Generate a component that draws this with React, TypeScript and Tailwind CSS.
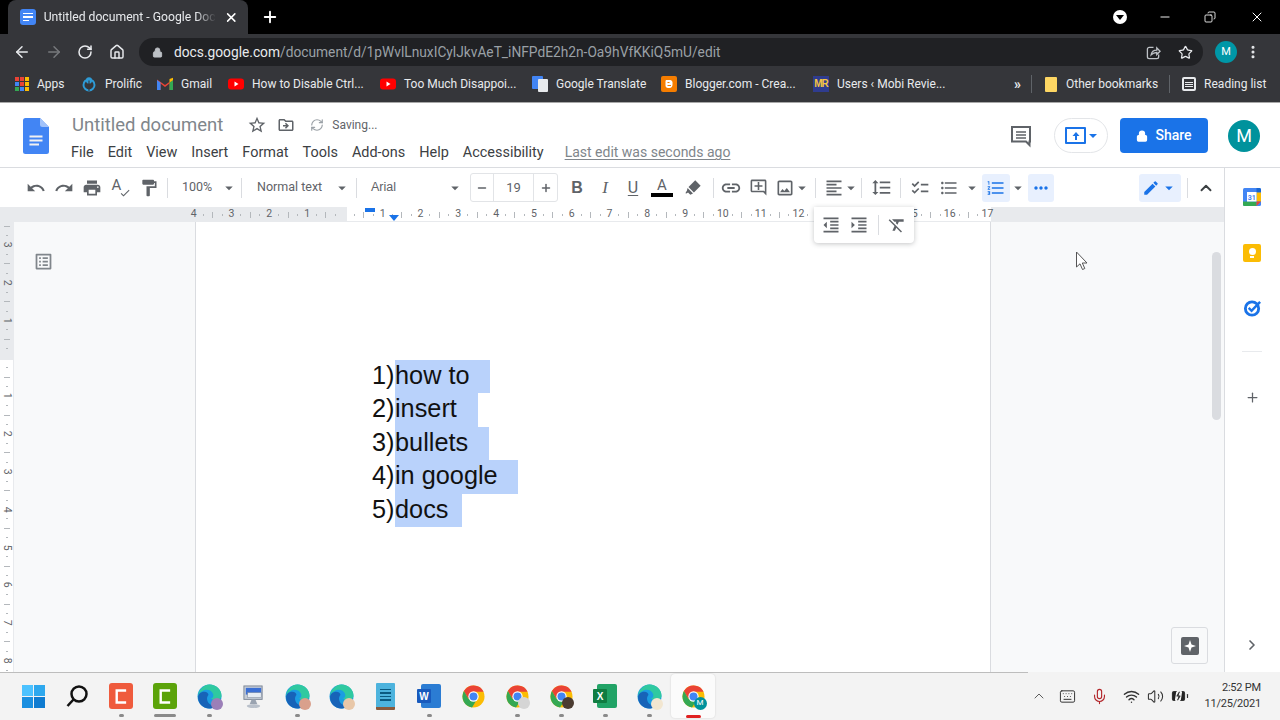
import { ArrowLeft, ArrowRight, RotateCw, Home, Lock, Star, Plus, X, Minus, Copy, ChevronUp, ChevronRight, Mic, Wifi, Volume2, Keyboard, BatteryCharging, EllipsisVertical, RefreshCw } from "lucide-react";
import {
  MdUndo, MdRedo, MdPrint, MdFormatPaint, MdLink, MdOutlineAddComment, MdOutlineImage, MdFormatAlignLeft,
  MdFormatLineSpacing, MdChecklist, MdFormatListBulleted, MdFormatListNumbered, MdMoreHoriz, MdEdit,
  MdFormatIndentDecrease, MdFormatIndentIncrease, MdFormatClear, MdOutlineDriveFileMove,
  MdStarBorder, MdOutlineListAlt, MdArrowDropDown, MdCheck,
} from "react-icons/md";

function DocsLogo({ className }: { className: string }) {
  return (
    <svg viewBox="0 0 26 36" className={className}>
      <path d="M2.5 0H17l9 9v24.5a2.5 2.5 0 0 1-2.5 2.5h-21A2.5 2.5 0 0 1 0 33.5v-31A2.5 2.5 0 0 1 2.5 0z" fill="#4285f4" />
      <path d="M17 0l9 9h-6.5A2.5 2.5 0 0 1 17 6.5z" fill="#a1c2fa" />
      <path d="M6.5 17.5h13v2h-13zM6.5 21.5h13v2h-13zM6.5 25.5h9.5v2H6.5z" fill="#f1f1f1" />
    </svg>
  );
}

function TabFavicon() {
  return (
    <div className="w-4 h-4 rounded-[3px] bg-[#4285f4] flex flex-col justify-center gap-[2px] px-[3px]">
      <div className="h-[1.5px] bg-white" />
      <div className="h-[1.5px] bg-white" />
      <div className="h-[1.5px] w-[6px] bg-white" />
    </div>
  );
}

function YouTubeIcon() {
  return (
    <svg viewBox="0 0 16 16" className="w-4 h-4">
      <rect x="0" y="2.5" width="16" height="11" rx="3" fill="#f00" />
      <path d="M6.5 5.5l4 2.5-4 2.5z" fill="#fff" />
    </svg>
  );
}

function AppsIcon() {
  const colors = ["#ea4335", "#ea4335", "#fbbc04", "#4285f4", "#ea4335", "#fbbc04", "#34a853", "#4285f4", "#fbbc04"];
  return (
    <div className="grid grid-cols-3 gap-[1.5px] w-[14px] h-[14px]">
      {colors.map((c, i) => (
        <div key={i} style={{ background: c }} />
      ))}
    </div>
  );
}

function ProlificIcon() {
  return (
    <svg viewBox="0 0 18 18" className="w-4 h-[18px]" fill="none">
      <circle cx="9" cy="10" r="6.2" stroke="#2e9bd6" strokeWidth="2.2" />
      <circle cx="9" cy="5" r="3.5" fill="#2e9bd6" />
      <path d="M9 5v12" stroke="#35363a" strokeWidth="1.2" />
    </svg>
  );
}

function GmailIcon() {
  return (
    <svg viewBox="0 0 16 14" className="w-4 h-[14px]">
      <path d="M0 2.5L8 8l8-5.5V13h-3.5V6.5L8 10 3.5 6.5V13H0z" fill="#ea4335" />
      <path d="M0 3v10h3.5V5.5z" fill="#4285f4" />
      <path d="M16 3v10h-3.5V5.5z" fill="#34a853" />
      <path d="M12.5 2L16 0.8V3l-3.5 2.5z" fill="#fbbc04" />
    </svg>
  );
}

function TranslateIcon() {
  return (
    <div className="relative w-4 h-4">
      <div className="w-[11px] h-[13px] bg-[#4285f4] rounded-[1px]" />
      <div className="absolute right-0 bottom-0 w-[10px] h-[13px] bg-[#e8eaed] rounded-[1px]" />
    </div>
  );
}

function BloggerIcon() {
  return (
    <svg viewBox="0 0 16 16" className="w-4 h-4">
      <rect width="16" height="16" rx="2" fill="#f57d00" />
      <path d="M5 4h4a2.5 2.5 0 0 1 2.5 3v1.5c0 2-1 3.5-3 3.5H7c-1.500 0-2.500-1-2.500-2.500V5z" fill="#fff" />
      <path d="M6.500 6.500h2M6.500 9.500h3.500" stroke="#f57d00" strokeWidth="1.200" />
    </svg>
  );
}

function MobiIcon() {
  return (
    <div className="w-4 h-4 bg-[#2f3c8f] flex items-center justify-center overflow-hidden">
      <span className="text-[10px] font-bold leading-none tracking-[-1px] text-[#f5c542] font-['Liberation_Sans',sans-serif]">MR</span>
    </div>
  );
}

function ChromeIcon() {
  return (
    <svg viewBox="0 0 24 24" className="w-[23px] h-[23px]">
      <circle cx="12" cy="12" r="11.500" fill="#fbbc04" />
      <path d="M12 .5A11.500 11.500 0 0 0 2 6.300L6.500 14l5.500-7h10.500A11.500 11.500 0 0 0 12 .5z" fill="#ea4335" />
      <path d="M2 6.300A11.500 11.500 0 0 0 10.500 23.400L15 16l-8.500-2z" fill="#34a853" />
      <circle cx="12" cy="12" r="5.400" fill="#fff" />
      <circle cx="12" cy="12" r="4.200" fill="#4285f4" />
    </svg>
  );
}

function EdgeIcon() {
  return (
    <svg viewBox="0 0 24 24" className="w-[25px] h-[25px]">
      <circle cx="12" cy="12" r="11.500" fill="#1b9de2" />
      <path d="M1 13C1 5 7 .5 12 .5c6.500 0 11.500 5 11.500 10.500 0 3-2.500 4.500-5.500 4.500-2 0-4-.7-4.500-1.500 2-.8 2.500-2.500 2-4.500C14.500 6.500 11 5 8 5.500 4 6.500 1 9.500 1 13z" fill="#2fc9a0" />
      <path d="M1 13c0-3.500 3-5.500 6-5.500 2.500 0 4 1.500 4 3-2 2-2 6 1.500 9 1.500 1 3 1.500 5 1.500-2 1.500-4 2.500-6 2.500C6 23.500 1 19 1 13z" fill="#1763b8" />
    </svg>
  );
}

function MiniBadge({ className }: { className: string }) {
  return <span className={`absolute -bottom-[1px] -right-[1px] w-[12px] h-[12px] rounded-full ${className}`} />;
}

function Slot({ dot, wide, active, children }: { dot?: boolean; wide?: boolean; active?: boolean; children: React.ReactNode }) {
  return (
    <div className={`relative w-[44px] h-[44px] flex items-center justify-center rounded-[4px] ${active ? "bg-[#fbfbfb] shadow-[0_0_2px_rgba(0,0,0,0.15)]" : ""}`}>
      {children}
      {dot && <div className="absolute bottom-[1px] w-[5px] h-[3px] rounded-full bg-[#8a8a8a]" />}
      {wide && <div className="absolute bottom-[1px] w-[22px] h-[3px] rounded-full bg-[#8a8a8a]" />}
      {active && <div className="absolute bottom-0 w-[15px] h-[3px] rounded-full bg-[#e02020]" />}
    </div>
  );
}

function Caret({ className = "text-[#5f6368]" }: { className?: string }) {
  return <MdArrowDropDown className={`w-[18px] h-[18px] ${className}`} />;
}

function ToolBtn({ children, className = "w-[28px]" }: { children: React.ReactNode; className?: string }) {
  return <div className={`h-[28px] flex items-center justify-center shrink-0 ${className}`}>{children}</div>;
}

function Sep({ className = "" }: { className?: string }) {
  return <div className={`w-px h-[20px] bg-[#dadce0] shrink-0 ${className}`} />;
}

function HorizontalRuler() {
  const labels = ["4", "3", "2", "1", "", "1", "2", "3", "4", "5", "6", "7", "8", "9", "10", "11", "12", "13", "14", "15", "16", "17"];
  return (
    <div className="relative h-[14px] flex items-center pl-[189px] pt-px overflow-hidden bg-[linear-gradient(to_right,#e8eaed_347px,#fff_347px,#fff_991px,#e8eaed_991px)]">
      {labels.map((label, i) => (
        <div key={i} className="w-[37.8px] shrink-0 flex items-center">
          <span className="w-[9.45px] text-center text-[10.5px] leading-none text-[#5f6368] whitespace-nowrap flex justify-center">{label}</span>
          {i < labels.length - 1 && (
            <>
              <span className="w-[9.45px] flex justify-center"><i className="block w-px h-[2px] bg-[#b4b8bc]" /></span>
              <span className="w-[9.45px] flex justify-center"><i className="block w-px h-[6px] bg-[#b4b8bc]" /></span>
              <span className="w-[9.45px] flex justify-center"><i className="block w-px h-[2px] bg-[#b4b8bc]" /></span>
            </>
          )}
        </div>
      ))}
      {/* indent markers */}
      <div className="absolute left-[365px] top-[1px] w-[10px] h-[4px] bg-[#1a73e8]" />
      <div className="absolute left-[389px] top-[8px] w-0 h-0 border-x-[5px] border-x-transparent border-t-[6px] border-t-[#1a73e8]" />
    </div>
  );
}

function VerticalRuler() {
  const labels = ["3", "2", "1", "", "1", "2", "3", "4", "5", "6", "7", "8"];
  return (
    <div className="w-[14px] shrink-0 overflow-hidden flex flex-col bg-[linear-gradient(to_bottom,#e8eaed_138px,#fff_138px)] border-r border-[#e8eaed]">
      <div className="h-[8.8px] flex items-center justify-center shrink-0"><i className="block h-px w-[6px] bg-[#b4b8bc]" /></div>
      <div className="h-[9.45px] flex items-center justify-center shrink-0"><i className="block h-px w-[2px] bg-[#b4b8bc]" /></div>
      {labels.map((label, i) => (
        <div key={i} className="h-[37.8px] shrink-0 flex flex-col">
          <span className="h-[9.45px] flex items-center justify-center text-[10.5px] leading-none text-[#5f6368] rotate-90">{label}</span>
          <span className="h-[9.45px] flex items-center justify-center"><i className="block h-px w-[2px] bg-[#b4b8bc]" /></span>
          <span className="h-[9.45px] flex items-center justify-center"><i className="block h-px w-[6px] bg-[#b4b8bc]" /></span>
          <span className="h-[9.45px] flex items-center justify-center"><i className="block h-px w-[2px] bg-[#b4b8bc]" /></span>
        </div>
      ))}
    </div>
  );
}

const listRows = [
  { n: "1)", text: "how to", w: "w-[95px]" },
  { n: "2)", text: "insert", w: "w-[83px]" },
  { n: "3)", text: "bullets", w: "w-[94px]" },
  { n: "4)", text: "in google", w: "w-[123px]" },
  { n: "5)", text: "docs", w: "w-[67px]" },
];

const bookmarks = [
  { icon: <AppsIcon />, label: "Apps", w: "w-[66px]" },
  { icon: <ProlificIcon />, label: "Prolific", w: "w-[76px]" },
  { icon: <GmailIcon />, label: "Gmail", w: "w-[71px]" },
  { icon: <YouTubeIcon />, label: "How to Disable Ctrl...", w: "w-[152px]" },
  { icon: <YouTubeIcon />, label: "Too Much Disappoi...", w: "w-[152px]" },
  { icon: <TranslateIcon />, label: "Google Translate", w: "w-[129px]" },
  { icon: <BloggerIcon />, label: "Blogger.com - Crea...", w: "w-[152px]" },
  { icon: <MobiIcon />, label: "Users ‹ Mobi Revie...", w: "w-[190px]" },
];

export default function App() {
  return (
    <div className="w-[1280px] h-[720px] overflow-hidden flex flex-col bg-white font-['Roboto',sans-serif]">
      {/* tab strip */}
      <div className="h-[34px] bg-black flex items-end shrink-0 text-white">
        <div className="ml-[8px] w-[240px] h-[34px] bg-[#35363a] rounded-t-[8px] flex items-center pl-[12px] pr-[10px] gap-[8px]">
          <TabFavicon />
          <span className="text-[12.2px] text-[#e8eaed] whitespace-nowrap overflow-hidden w-[178px] [mask-image:linear-gradient(to_right,#000_88%,transparent)]">
            Untitled document - Google Doc
          </span>
          <X className="w-[15px] h-[15px] text-white" strokeWidth={2.5} />
        </div>
        <div className="h-[34px] flex items-center ml-[13px]">
          <Plus className="w-[18px] h-[18px]" strokeWidth={2.5} />
        </div>
        <div className="ml-auto h-[34px] flex items-center">
          <div className="w-[14px] h-[14px] rounded-full bg-white flex items-center justify-center mr-[31px]">
            <div className="w-0 h-0 border-x-[4px] border-x-transparent border-t-[5px] border-t-black" />
          </div>
          <Minus className="w-[14px] h-[14px] text-white mr-[32px]" strokeWidth={1.6} />
          <Copy className="w-[12px] h-[12px] text-white mr-[33px] -scale-x-100" strokeWidth={1.7} />
          <X className="w-[16px] h-[16px] text-white mr-[15px]" strokeWidth={1.5} />
        </div>
      </div>

      {/* address bar */}
      <div className="h-[36px] bg-[#35363a] flex items-center shrink-0 text-[#e8eaed]">
        <div className="flex items-center pl-[13px]">
          <ArrowLeft className="w-[18px] h-[18px] mr-[14px]" />
          <ArrowRight className="w-[18px] h-[18px] mr-[14px] text-[#77797c]" />
          <RotateCw className="w-[16px] h-[16px] mr-[16px]" strokeWidth={2.3} />
          <Home className="w-[16px] h-[16px]" strokeWidth={2.2} />
        </div>
        <div className="ml-[14px] w-[1064px] h-[28px] rounded-full bg-[#202124] flex items-center pl-[13px] pr-[10px]">
          <Lock className="w-[11px] h-[11px] text-[#bdc1c6] fill-[#bdc1c6]" />
          <span className="ml-[11px] text-[13.75px] text-[#e8eaed] whitespace-nowrap">
            docs.google.com<span className="text-[#9aa0a6]">/document/d/1pWvlLnuxICylJkvAeT_iNFPdE2h2n-Oa9hVfKKiQ5mU/edit</span>
          </span>
          <svg viewBox="0 0 16 16" className="ml-auto w-[15px] h-[15px]" fill="none" stroke="#bdc1c6" strokeWidth="1.400">
            <path d="M8 2.500H3.500a2 2 0 0 0-2 2v8a2 2 0 0 0 2 2h8a2 2 0 0 0 2-2V10" />
            <path d="M5.500 10.500c.5-3 2.500-5 6-5V3l3.500 3.700-3.500 3.500V8c-2.500 0-4.500 1-6 2.500z" />
          </svg>
          <Star className="ml-[17px] w-[15px] h-[15px] text-[#e8eaed]" strokeWidth={2} />
        </div>
        <div className="ml-[12px] w-[22px] h-[22px] rounded-full bg-[#0097a7] flex items-center justify-center text-[11px] text-white">M</div>
        <EllipsisVertical className="ml-[8px] w-[16px] h-[16px]" strokeWidth={2.6} />
      </div>

      {/* bookmarks */}
      <div className="h-[33px] bg-[#35363a] flex items-center pl-[15px] pb-[4px] shrink-0 text-[12px] text-[#e8eaed] border-b border-[#a8a8a8]">
        {bookmarks.map((b) => (
          <div key={b.label} className={`flex items-center gap-[8px] shrink-0 whitespace-nowrap ${b.w}`}>
            {b.icon}
            <span>{b.label}</span>
          </div>
        ))}
        <span className="ml-[11px] w-[12px] text-[14px] font-bold">»</span>
        <div className="ml-[5px] w-px h-[18px] bg-[#5f6368]" />
        <div className="ml-[13px] w-[12px] h-[15px] bg-[#fdd663] rounded-[1px]" />
        <span className="ml-[9px] whitespace-nowrap">Other bookmarks</span>
        <div className="ml-[11px] w-px h-[18px] bg-[#5f6368]" />
        <div className="ml-[12px] w-[14px] h-[14px] border-2 border-[#e8eaed] rounded-[2px] flex flex-col justify-center gap-[1px] px-[1px]">
          <i className="block h-px bg-[#e8eaed]" />
          <i className="block h-px bg-[#e8eaed]" />
          <i className="block h-px bg-[#e8eaed]" />
        </div>
        <span className="ml-[8px] whitespace-nowrap">Reading list</span>
      </div>

      {/* docs header */}
      <div className="h-[65px] shrink-0 flex items-start border-b border-[#dadce0]">
        <DocsLogo className="ml-[23px] mt-[15px] w-[26px] h-[36px]" />
        <div className="ml-[23px] mt-[9px]">
          <div className="flex items-center h-[26px]">
            <span className="pt-[2px] text-[18.5px] text-[#80868b] whitespace-nowrap">Untitled document</span>
            <MdStarBorder className="ml-[24px] w-[20px] h-[20px] text-[#5f6368]" />
            <MdOutlineDriveFileMove className="ml-[10px] w-[18px] h-[18px] text-[#5f6368]" />
            <RefreshCw className="ml-[15px] w-[14px] h-[14px] text-[#9aa0a6]" />
            <span className="ml-[8px] text-[12px] text-[#5f6368]">Saving...</span>
          </div>
          <div className="-ml-[1px] flex items-center mt-[4px] gap-[14px] text-[14.45px] text-[#3c4043] whitespace-nowrap">
            <span>File</span>
            <span>Edit</span>
            <span>View</span>
            <span>Insert</span>
            <span>Format</span>
            <span>Tools</span>
            <span>Add-ons</span>
            <span>Help</span>
            <span>Accessibility</span>
            <span className="ml-[7px] text-[14px] underline underline-offset-2 text-[#80868b]">Last edit was seconds ago</span>
          </div>
        </div>
        <div className="ml-auto mt-[15px] flex items-center h-[35px] pr-[20px]">
          <svg viewBox="0 0 24 24" className="w-[24px] h-[24px] text-[#5f6368]" fill="none" stroke="currentColor" strokeWidth="2">
            <path d="M3 3h18v14.500h-.5V21l-3.500-3.500H3z" />
            <path d="M7 8h10M7 11h10M7 14h10" strokeWidth="1.600" />
          </svg>
          <div className="ml-[21px] w-[54px] h-[35px] rounded-full border border-[#e3e5e8] flex items-center justify-center gap-[3px]">
            <div className="w-[21px] h-[17px] border-2 border-[#1a73e8] rounded-[1px] flex items-center justify-center">
              <svg viewBox="0 0 10 10" className="w-[10px] h-[10px]"><path d="M5 1l3.500 4H6v4H4V5H1.500z" fill="#1a73e8" /></svg>
            </div>
            <div className="w-0 h-0 border-x-[4px] border-x-transparent border-t-[4px] border-t-[#1a73e8]" />
          </div>
          <div className="ml-[12px] w-[88px] h-[35px] rounded-[4px] bg-[#1a73e8] flex items-center justify-center gap-[7px] text-white text-[14px] font-medium">
            <Lock className="w-[12px] h-[12px] fill-white" strokeWidth={2.5} />
            <span>Share</span>
          </div>
          <div className="ml-[20px] w-[32px] h-[32px] rounded-full bg-[#00929c] flex items-center justify-center text-white text-[18px]">M</div>
        </div>
      </div>

      {/* editor + side panel */}
      <div className="flex-1 min-h-0 flex">
        <div className="relative w-[1225px] shrink-0 flex flex-col border-r border-[#dadce0]">
          {/* toolbar */}
          <div className="h-[39px] shrink-0 flex items-center pl-[22px] text-[#5f6368]">
            <ToolBtn><MdUndo className="w-[20px] h-[20px]" /></ToolBtn>
            <ToolBtn><MdRedo className="w-[20px] h-[20px]" /></ToolBtn>
            <ToolBtn><MdPrint className="w-[20px] h-[20px]" /></ToolBtn>
            <ToolBtn className="w-[29px]">
              <div className="relative w-[18px] h-[18px]">
                <span className="absolute left-0 -top-[1px] text-[15px] leading-none font-['Roboto',sans-serif]">A</span>
                <MdCheck className="absolute -right-[1px] -bottom-[2px] w-[12px] h-[12px]" />
              </div>
            </ToolBtn>
            <ToolBtn><MdFormatPaint className="w-[20px] h-[20px]" /></ToolBtn>
            <Sep className="ml-[4px]" />
            <span className="ml-[14px] w-[37px] text-[12.5px]">100%</span>
            <Caret className="text-[#5f6368] ml-[1px]" />
            <Sep className="ml-[3px]" />
            <span className="ml-[15px] w-[76px] text-[12.5px] whitespace-nowrap">Normal text</span>
            <Caret className="text-[#5f6368]" />
            <Sep className="ml-[5px]" />
            <span className="ml-[14px] w-[76px] text-[12.5px] font-['Liberation_Sans',sans-serif]">Arial</span>
            <Caret className="text-[#5f6368] ml-[-1px] mr-[5px]" />
            <div className="h-[29px] w-[88px] flex items-stretch border border-[#e2e4e7] rounded-[3px] shrink-0 ml-[1px]">
              <div className="w-[23px] flex items-center justify-center border-r border-[#e2e4e7]"><Minus className="w-[12px] h-[12px]" strokeWidth={3} /></div>
              <div className="flex-1 flex items-center justify-center text-[13px]">19</div>
              <div className="w-[24px] flex items-center justify-center border-l border-[#e2e4e7]"><Plus className="w-[12px] h-[12px]" strokeWidth={3} /></div>
            </div>
            <ToolBtn className="w-[28px] ml-[5px]"><span className="text-[16px] font-bold font-['Liberation_Sans',sans-serif]">B</span></ToolBtn>
            <ToolBtn><span className="text-[17px] italic font-medium font-['Liberation_Serif',serif]">I</span></ToolBtn>
            <ToolBtn><span className="text-[16px] underline underline-offset-2 font-['Roboto',sans-serif]">U</span></ToolBtn>
            <ToolBtn className="w-[30px]">
              <div className="flex flex-col items-center">
                <span className="text-[15px] leading-[14px]">A</span>
                <div className="w-[22px] h-[4px] bg-black mt-[1px]" />
              </div>
            </ToolBtn>
            <ToolBtn className="w-[31px]">
              <svg viewBox="0 0 20 20" className="w-[18px] h-[18px]" fill="currentColor"><path d="M12.500 1.500l6 6-7.500 7.500-6-6zM4 10l6 6-3 1.500-2.500-2.500L2 16.500v-2l1-1z" /></svg>
            </ToolBtn>
            <Sep className="ml-[5px]" />
            <ToolBtn className="w-[33px]"><MdLink className="w-[22px] h-[22px] ml-[1px]" /></ToolBtn>
            <ToolBtn className="w-[23px]"><MdOutlineAddComment className="w-[19px] h-[19px]" /></ToolBtn>
            <ToolBtn className="w-[30px]"><MdOutlineImage className="w-[20px] h-[20px]" /></ToolBtn>
            <Caret className="text-[#5f6368] -ml-[7px]" />
            <Sep className="ml-[4px]" />
            <ToolBtn className="w-[26px] ml-[5px]"><MdFormatAlignLeft className="w-[20px] h-[20px]" /></ToolBtn>
            <Caret className="text-[#5f6368] -ml-[5px]" />
            <Sep className="ml-[1px]" />
            <ToolBtn className="w-[38px]"><MdFormatLineSpacing className="w-[21px] h-[21px]" /></ToolBtn>
            <Sep />
            <ToolBtn className="w-[37px]"><MdChecklist className="w-[20px] h-[20px]" /></ToolBtn>
            <ToolBtn className="w-[22px]"><MdFormatListBulleted className="w-[20px] h-[20px]" /></ToolBtn>
            <Caret className="text-[#5f6368] ml-[3px]" />
            <div className="ml-[1px] w-[28px] h-[28px] rounded-[3px] bg-[#e8f0fe] flex items-center justify-center text-[#1a73e8]">
              <MdFormatListNumbered className="w-[20px] h-[20px]" />
            </div>
            <Caret className="text-[#5f6368] ml-[-1px]" />
            <div className="ml-[1px] w-[26px] h-[28px] rounded-[3px] bg-[#e8f0fe] flex items-center justify-center text-[#1a73e8]">
              <MdMoreHoriz className="w-[20px] h-[20px]" />
            </div>
            <div className="ml-[85px] w-[42px] h-[28px] rounded-[3px] bg-[#e8f0fe] flex items-center justify-center text-[#1a73e8]">
              <MdEdit className="w-[18px] h-[18px]" />
              <Caret className="text-[#1a73e8]" />
            </div>
            <Sep className="ml-[6px]" />
            <ChevronUp className="ml-[9px] w-[18px] h-[18px] text-[#3c4043]" strokeWidth={2.5} />
          </div>

          <HorizontalRuler />

          {/* canvas */}
          <div className="flex-1 min-h-0 flex overflow-hidden bg-[#f8f9fa] border-t border-[#e8eaed]">
            <VerticalRuler />
            <div className="w-[181px] shrink-0 pl-[19px] pt-[29px] text-[#80868b]">
              <MdOutlineListAlt className="w-[21px] h-[21px]" />
            </div>
            <div className="w-[796px] shrink-0 bg-white border-x border-[#dadce0] pl-[176px] pt-[138px] font-['Liberation_Sans',sans-serif] text-[25.3px] leading-[30px] text-[#111]">
              {listRows.map((r) => (
                <div key={r.n} className="flex h-[33.4px]">
                  <span className="w-[23px] shrink-0 whitespace-nowrap">{r.n}</span>
                  <span className={`bg-[#b9d2fb] whitespace-nowrap ${r.w}`}>{r.text}</span>
                </div>
              ))}
            </div>
          </div>

          {/* scrollbar */}
          <div className="absolute left-[1212px] top-[84px] w-[9px] h-[168px] rounded-full bg-[#dadce0]" />
          {/* cursor */}
          <svg viewBox="0 0 14 20" className="absolute left-[1075px] top-[83px] w-[14px] h-[20px]">
            <path d="M1.500 1v15l3.500-3.200 2.500 5.700 2.300-1-2.500-5.500h4.700z" fill="#fff" stroke="#555" strokeWidth="1" />
          </svg>
          {/* explore button */}
          <div className="absolute left-[1171px] top-[459px] w-[37px] h-[37px] bg-[#f8f9fa] border border-[#dadce0] rounded-[3px] flex items-center justify-center">
            <div className="relative w-[18px] h-[18px] bg-[#5f6368] rounded-[2px] flex items-center justify-center">
              <svg viewBox="0 0 12 12" className="w-[12px] h-[12px]"><path d="M6 0l1.500 4.500L12 6 7.500 7.500 6 12 4.500 7.500 0 6l4.500-1.500z" fill="#fff" /></svg>
            </div>
          </div>
          {/* floating toolbar */}
          <div className="absolute left-[814px] top-[39px] w-[100px] h-[36px] bg-white rounded-b-[4px] shadow-[0_1px_5px_rgba(60,64,67,0.3)] flex items-center pl-[7px] text-[#5f6368]">
            <ToolBtn className="w-[20px]"><MdFormatIndentDecrease className="w-[20px] h-[20px]" /></ToolBtn>
            <ToolBtn className="w-[20px] ml-[8px]"><MdFormatIndentIncrease className="w-[20px] h-[20px]" /></ToolBtn>
            <Sep className="ml-[9px]" />
            <ToolBtn className="w-[20px] ml-[8px]"><MdFormatClear className="w-[20px] h-[20px]" /></ToolBtn>
          </div>
        </div>

        {/* side panel */}
        <div className="flex-1 flex flex-col items-center pr-[1px]">
          <svg viewBox="0 0 18 18" className="mt-[20px] w-[18px] h-[18px]">
            <rect width="18" height="18" rx="1.500" fill="#4285f4" />
            <path d="M13.500 0H16.500A1.500 1.500 0 0 1 18 1.500V4.500H13.500z" fill="#1967d2" />
            <path d="M13.500 4.500H18v9h-4.500z" fill="#fbbc04" />
            <path d="M0 13.500h13.500V18H1.500A1.500 1.500 0 0 1 0 16.500z" fill="#34a853" />
            <path d="M13.500 13.500H18L13.500 18z" fill="#ea4335" />
            <rect x="4" y="4" width="9.500" height="9.500" fill="#fff" />
            <text x="8.750" y="11.700" textAnchor="middle" fontSize="7" fontWeight="700" fill="#4285f4" fontFamily="Roboto, sans-serif">31</text>
          </svg>
          <div className="mt-[38px] w-[18px] h-[18px] rounded-[2px] bg-[#fbbc04] flex flex-col items-center pt-[4px]">
            <div className="w-[7px] h-[7px] rounded-full bg-white" />
            <div className="w-[4px] h-[2px] bg-white mt-[1px]" />
          </div>
          <svg viewBox="0 0 20 20" className="mt-[36px] w-[19px] h-[19px]" fill="none">
            <circle cx="9.500" cy="11" r="7" stroke="#1a73e8" strokeWidth="3" />
            <path d="M6 10.500l3 3L18 4" stroke="#1a73e8" strokeWidth="2.600" />
          </svg>
          <div className="mt-[34px] w-[20px] h-px bg-[#e8eaed]" />
          <Plus className="mt-[38px] w-[15px] h-[15px] text-[#5f6368]" strokeWidth={2} />
          <ChevronRight className="mt-[232px] w-[16px] h-[16px] text-[#5f6368]" strokeWidth={2.500} />
        </div>
      </div>

      {/* windows taskbar */}
      <div className="relative h-[48px] shrink-0 bg-[#f3f3f3] flex items-center pl-[11px]">
        <div className="absolute left-0 top-0 w-[1028px] h-px bg-[#bdbdbd]" />
        <Slot>
          <div className="grid grid-cols-2 gap-[1px] w-[23px] h-[23px]">
            <div className="bg-[#4cc2ff]" />
            <div className="bg-[#2ea8ee]" />
            <div className="bg-[#1a8fe0]" />
            <div className="bg-[#0f7bd0]" />
          </div>
        </Slot>
        <Slot>
          <svg viewBox="0 0 24 24" className="w-[24px] h-[24px]" fill="none" stroke="#111" strokeWidth="2.500"><circle cx="14" cy="10" r="7.500" /><path d="M8.500 15.500L2.500 22" /></svg>
        </Slot>
        <Slot dot>
          <div className="w-[24px] h-[26px] rounded-[3px] bg-[#ef5b3d] flex items-center justify-center">
            <svg viewBox="0 0 14 18" className="w-[12px] h-[17px]" fill="none" stroke="#fff" strokeWidth="2.800"><path d="M13 2H2v14h11" /></svg>
          </div>
        </Slot>
        <Slot wide>
          <div className="w-[24px] h-[26px] rounded-[3px] bg-[#5ba30a] flex items-center justify-center">
            <svg viewBox="0 0 14 18" className="w-[12px] h-[17px]" fill="none" stroke="#fff" strokeWidth="2.800"><path d="M13 2H2v14h11" /></svg>
          </div>
        </Slot>
        <Slot dot>
          <div className="relative">
            <EdgeIcon />
            <MiniBadge className="bg-[#9b7fb8]" />
          </div>
        </Slot>
        <Slot>
          <svg viewBox="0 0 24 26" className="w-[23px] h-[25px]">
            <rect x="2" y="2" width="19" height="14" fill="#c5ccd6" stroke="#7d8796" />
            <rect x="4" y="4" width="16" height="7" fill="#3b6fd4" />
            <rect x="6" y="9" width="14" height="5" fill="#e7ecf3" stroke="#7d8796" strokeWidth=".5" />
            <path d="M10 16h4l2 5H8z" fill="#9aa3b0" />
            <ellipse cx="12" cy="23" rx="7" ry="2" fill="#b9c0ca" />
          </svg>
        </Slot>
        <Slot dot>
          <div className="relative">
            <EdgeIcon />
            <MiniBadge className="bg-[#d9a08c]" />
          </div>
        </Slot>
        <Slot>
          <div className="relative">
            <EdgeIcon />
            <MiniBadge className="bg-[#e8c7a8]" />
          </div>
        </Slot>
        <Slot>
          <div className="w-[19px] h-[27px] rounded-[1px] bg-[#4db3dd] border-b-[3px] border-b-[#8a5a3c] flex flex-col justify-center gap-[2px] px-[4px]">
            <i className="block h-[1.500px] bg-[#0b5a80]" />
            <i className="block h-[1.500px] bg-[#0b5a80]" />
            <i className="block h-[1.500px] bg-[#0b5a80]" />
            <i className="block h-[1.500px] bg-[#0b5a80]" />
          </div>
        </Slot>
        <Slot dot>
          <div className="relative w-[24px] h-[24px]">
            <div className="absolute right-0 top-0 w-[20px] h-[24px] rounded-[2px] bg-[#2b7cd3]" />
            <div className="absolute left-0 top-[5px] w-[14px] h-[14px] rounded-[1px] bg-[#185abd] flex items-center justify-center text-white text-[10px] font-bold font-['Liberation_Sans',sans-serif]">W</div>
          </div>
        </Slot>
        <Slot><ChromeIcon /></Slot>
        <Slot dot>
          <div className="relative">
            <ChromeIcon />
            <MiniBadge className="bg-[#d5d5d5]" />
          </div>
        </Slot>
        <Slot dot>
          <div className="relative">
            <ChromeIcon />
            <MiniBadge className="bg-[#4a3b30]" />
          </div>
        </Slot>
        <Slot dot>
          <div className="relative w-[24px] h-[24px]">
            <div className="absolute right-0 top-0 w-[20px] h-[24px] rounded-[2px] bg-[#21a366]" />
            <div className="absolute left-0 top-[5px] w-[14px] h-[14px] rounded-[1px] bg-[#107c41] flex items-center justify-center text-white text-[10px] font-bold font-['Liberation_Sans',sans-serif]">X</div>
          </div>
        </Slot>
        <Slot dot>
          <div className="relative">
            <EdgeIcon />
            <MiniBadge className="bg-[#f2e6d0]" />
          </div>
        </Slot>
        <Slot active>
          <div className="relative">
            <ChromeIcon />
            <span className="absolute -bottom-[2px] -right-[2px] w-[13px] h-[13px] rounded-full bg-[#00929c] text-white text-[8px] flex items-center justify-center">M</span>
          </div>
        </Slot>

        <div className="ml-auto flex items-center pr-[19px] text-[#333]">
          <ChevronUp className="w-[16px] h-[16px] text-[#444]" strokeWidth={1.300} />
          <Keyboard className="ml-[12px] w-[17px] h-[17px] text-[#333]" strokeWidth={1.400} />
          <Mic className="ml-[15px] w-[17px] h-[17px] text-[#b3262b]" strokeWidth={1.600} />
          <Wifi className="ml-[15px] w-[17px] h-[17px]" strokeWidth={2} />
          <Volume2 className="ml-[7px] w-[17px] h-[17px]" strokeWidth={1.500} />
          <BatteryCharging className="ml-[7px] w-[18px] h-[18px] fill-[#222]" strokeWidth={1.600} />
          <div className="ml-[15px] flex flex-col items-end text-[11px] tracking-[-0.2px] leading-[16px] text-[#333]">
            <span>2:52 PM</span>
            <span>11/25/2021</span>
          </div>
        </div>
      </div>
    </div>
  );
}
